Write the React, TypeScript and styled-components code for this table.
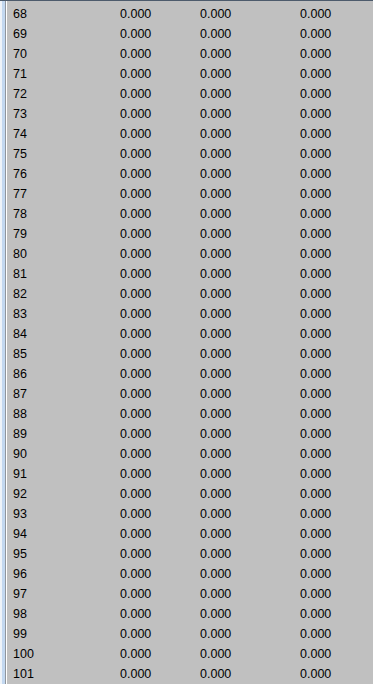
import styled, { createGlobalStyle } from "styled-components";

const GlobalStyle = createGlobalStyle`
    html, body {
        margin: 0;
        padding: 0;
        background: #c0c0c0;
        overflow: hidden;
    }
`

const Frame = styled.div`
    width: 373px;
    height: 684px;
    display: flex;
    overflow: hidden;
    border-top: 1px solid #4d5b6c;
    box-sizing: border-box;
    background: #c0c0c0;
`

const Edge = styled.div`
    width: 7px;
    flex-shrink: 0;
    background: linear-gradient(
        to right,
        #eef3f9 0px, #eef3f9 2px,
        #c3d8f0 2px, #c3d8f0 5px,
        #8f959c 5px, #8f959c 6px,
        #ffffff 6px, #ffffff 7px
    );
`

const Table = styled.div`
    flex: 1;
    padding: 3px 0 0 6px;
    font-family: "Liberation Sans", Arial, sans-serif;
    font-size: 12.5px;
    color: #000;
`

const Row = styled.div`
    display: grid;
    grid-template-columns: 107px 80px 100px 1fr;
    height: 20px;
    line-height: 20px;
`

const Cell = styled.span`
    white-space: nowrap;
`

const rows = Array.from({ length: 34 }, (_, i) => 68 + i);

export default function App() {
    return (
        <>
            <GlobalStyle />
            <Frame>
                <Edge />
                <Table>
                    {rows.map(n => (
                        <Row key={n}>
                            <Cell>{n}</Cell>
                            <Cell>0.000</Cell>
                            <Cell>0.000</Cell>
                            <Cell>0.000</Cell>
                        </Row>
                    ))}
                </Table>
            </Frame>
        </>
    )
}
